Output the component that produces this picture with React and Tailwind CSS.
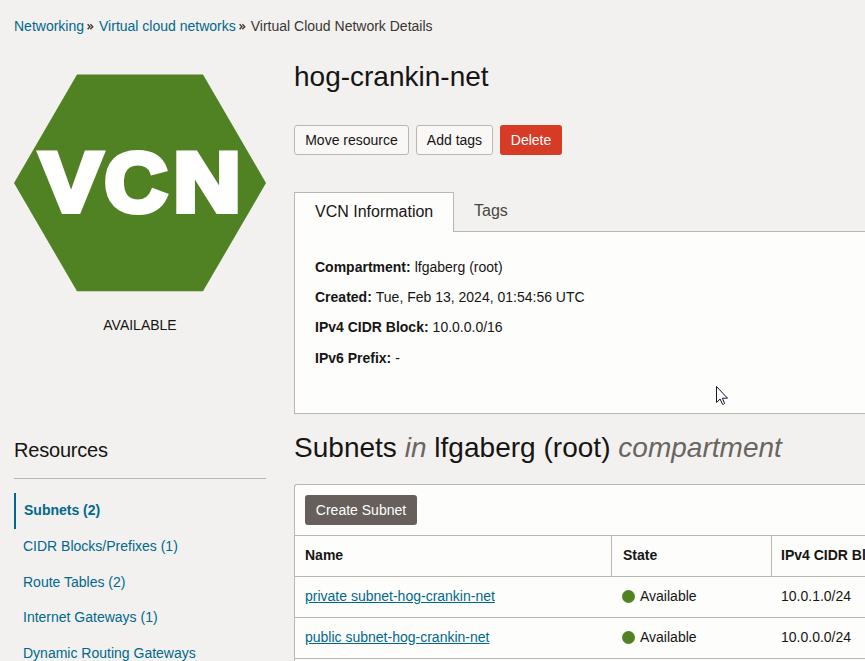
const details = [
  ["Compartment:", "lfgaberg (root)"],
  ["Created:", "Tue, Feb 13, 2024, 01:54:56 UTC"],
  ["IPv4 CIDR Block:", "10.0.0.0/16"],
  ["IPv6 Prefix:", "-"],
];

const resources = [
  "CIDR Blocks/Prefixes (1)",
  "Route Tables (2)",
  "Internet Gateways (1)",
  "Dynamic Routing Gateways",
];

const subnets = [
  ["private subnet-hog-crankin-net", "10.0.1.0/24"],
  ["public subnet-hog-crankin-net", "10.0.0.0/24"],
];

function Separator() {
  return (
    <svg width="7" height="8" viewBox="0 0 7 8" className="mt-px mr-[5px] ml-[3px]" fill="none" stroke="#3a3632" strokeWidth="1.300">
      <path d="M.6 1.200 3 3.700.6 6.300M3.400 1.200l2.400 2.500-2.400 2.600" />
    </svg>
  );
}

function VcnBadge() {
  return (
    <svg width="252" height="218" viewBox="0 0 252 218" className="block">
      <polygon points="63,0.5 189,0.5 252,109 189,217.3 63,217.3 0,109" fill="#508223" />
      <g
        fill="#fff"
        stroke="#fff"
        strokeWidth="6"
        fontFamily="'Liberation Sans', Arial, sans-serif"
        fontWeight="700"
        fontSize="83"
      >
        <text x="26.3" y="137" textLength="61.5" lengthAdjust="spacingAndGlyphs">V</text>
        <text x="90.7" y="137" textLength="62.3" lengthAdjust="spacingAndGlyphs">C</text>
        <text x="159.4" y="137" textLength="67.1" lengthAdjust="spacingAndGlyphs">N</text>
      </g>
    </svg>
  );
}

export default function App() {
  return (
    <div className="relative h-[661px] w-[865px] overflow-hidden bg-[#f3f1f0] font-['Liberation_Sans',Arial,sans-serif] text-[14px] leading-5 text-[#161513]">
      <nav className="flex h-[52px] items-center pl-[14px]">
        <a className="text-[#00688c]">Networking</a>
        <Separator />
        <a className="text-[#00688c]">Virtual cloud networks</a>
        <Separator />
        <span className="text-[#3a3632]">Virtual Cloud Network Details</span>
      </nav>
      <div className="flex">
        <aside className="ml-[14px] w-[252px] shrink-0 pt-[22px]">
          <VcnBadge />
          <div className="mt-[23px] text-center">AVAILABLE</div>
          <h2 className="mt-[101px] text-[20px] leading-7 tracking-[-0.2px]">Resources</h2>
          <div className="mt-[14px] h-px bg-[#bbb6af]" />
          <ul className="mt-[14px]">
            <li className="flex h-9 items-center border-l-2 border-[#00688c] pb-[2px] pl-2 font-bold text-[#00688c]">Subnets (2)</li>
            {resources.map((name) => (
              <li key={name} className="flex h-[35.7px] items-center pb-[2px] pl-[9px] whitespace-nowrap text-[#00688c]">{name}</li>
            ))}
          </ul>
        </aside>
        <main className="ml-7 min-w-0 flex-1">
          <h1 className="pt-[5px] text-[28px] leading-10">hog-crankin-net</h1>
          <div className="mt-7 flex gap-[7px]">
            <button className="h-[30px] w-[115px] rounded-[3px] border border-[#bbb6af] bg-[#f9f8f7] whitespace-nowrap">Move resource</button>
            <button className="h-[30px] w-[77px] rounded-[3px] border border-[#bbb6af] bg-[#f9f8f7] whitespace-nowrap">Add tags</button>
            <button className="h-[30px] w-[62px] rounded-[3px] bg-[#d63b25] text-white">Delete</button>
          </div>
          <div className="mt-[37px] flex h-10 text-[16px]">
            <div className="flex w-[160px] items-center border-t border-r border-l border-[#bbb6af] bg-[#fdfdfc] pb-[2px] pl-5">VCN Information</div>
            <div className="flex flex-1 items-center border-b border-[#bbb6af] pb-[2px] pl-5 text-[#4a4541]">Tags</div>
          </div>
          <dl className="flex h-[182px] flex-col gap-[10.2px] border-b border-l border-[#bbb6af] bg-[#fdfdfc] pt-[25px] pl-5">
            {details.map(([label, value]) => (
              <div key={label} className="flex gap-1">
                <dt className="font-bold">{label}</dt>
                <dd>{value}</dd>
              </div>
            ))}
          </dl>
          <h2 className="mt-[14px] text-[28px] leading-10 tracking-[0.02px] whitespace-nowrap">
            Subnets <i className="text-[#6b6560]">in</i> lfgaberg (root) <i className="text-[#6b6560]">compartment</i>
          </h2>
          <section className="mt-4 h-[200px] rounded-tl-[3px] border-t border-l border-[#bbb6af] bg-[#fdfdfc]">
            <div className="flex h-[50px] items-center pl-[10px]">
              <button className="h-[30px] w-[112px] rounded-[3px] bg-[#665f5b] whitespace-nowrap text-white">Create Subnet</button>
            </div>
            <div className="flex h-[42px] border-y border-[#bbb6af] font-bold">
              <div className="flex w-[317px] shrink-0 items-center border-r border-[#bbb6af] pb-[2px] pl-[10px]">Name</div>
              <div className="flex w-[160px] shrink-0 items-center border-r border-[#bbb6af] pb-[2px] pl-[11px]">State</div>
              <div className="flex items-center pb-[2px] pl-[9px] whitespace-nowrap">IPv4 CIDR Block</div>
            </div>
            {subnets.map(([name, cidr]) => (
              <div key={name} className="flex h-[41px] items-center border-b border-[#bbb6af] pb-[2px]">
                <div className="w-[317px] shrink-0 pl-[10px]">
                  <a className="text-[#00688c] underline">{name}</a>
                </div>
                <div className="flex w-[160px] shrink-0 items-center gap-[5px] pl-[10px]">
                  <span className="size-[13px] rounded-full bg-[#508223]" />
                  Available
                </div>
                <div className="pl-[9px]">{cidr}</div>
              </div>
            ))}
          </section>
        </main>
      </div>
      <svg className="absolute top-[386px] left-[716px]" width="13" height="20" viewBox="0 0 13 20">
        <path d="M.5.5v16l3.6-3.5 2.4 5.3q1.1.6 2.1-.8L6.400 12.200h5.100z" fill="#fff" stroke="#15152a" strokeWidth="1" />
      </svg>
    </div>
  );
}
